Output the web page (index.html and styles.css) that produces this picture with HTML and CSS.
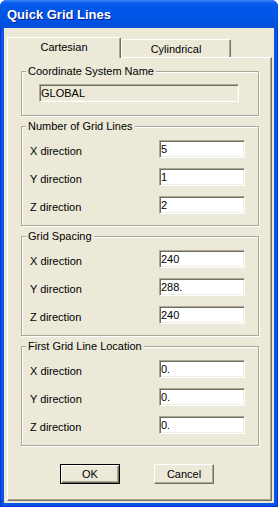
FILE: index.html
```html
<!DOCTYPE html>
<html lang="en">
<head>
  <meta charset="UTF-8" />
  <title>Quick Grid Lines</title>
  <link rel="stylesheet" href="styles.css">
</head>
<body>

<div class="window">
  <div class="titlebar">
    <span class="title">Quick Grid Lines</span>
  </div>

  <div class="client">
    <!-- tabs -->
    <div class="tabs">
      <div class="tab active">Cartesian</div>
      <div class="tab">Cylindrical</div>
    </div>

    <div class="panel">
      <fieldset class="group group-name">
        <legend>Coordinate System Name</legend>
        <input type="text" class="field field-name" value="GLOBAL" readonly>
      </fieldset>

      <fieldset class="group">
        <legend>Number of Grid Lines</legend>
        <div class="row"><label>X direction</label><input type="text" class="field" value="5"></div>
        <div class="row"><label>Y direction</label><input type="text" class="field" value="1"></div>
        <div class="row"><label>Z direction</label><input type="text" class="field" value="2"></div>
      </fieldset>

      <fieldset class="group">
        <legend>Grid Spacing</legend>
        <div class="row"><label>X direction</label><input type="text" class="field" value="240"></div>
        <div class="row"><label>Y direction</label><input type="text" class="field" value="288."></div>
        <div class="row"><label>Z direction</label><input type="text" class="field" value="240"></div>
      </fieldset>

      <fieldset class="group">
        <legend>First Grid Line Location</legend>
        <div class="row"><label>X direction</label><input type="text" class="field" value="0."></div>
        <div class="row"><label>Y direction</label><input type="text" class="field" value="0."></div>
        <div class="row"><label>Z direction</label><input type="text" class="field" value="0."></div>
      </fieldset>

      <div class="buttons">
        <button class="btn btn-default">OK</button>
        <button class="btn">Cancel</button>
      </div>
    </div>
  </div>
</div>

</body>
</html>
```

FILE: styles.css
```css
body {
  margin: 0;
  background: #fff;
  font-family: "Liberation Sans", Arial, sans-serif;
  font-size: 11px;
  color: #000;
}
.window {
  width: 278px;
  height: 507px;
  box-sizing: border-box;
  display: flex;
  flex-direction: column;
  background: #0a55e6;
  border-radius: 7px 7px 0 0;
  padding: 0 4px 4px 4px;
  box-shadow: inset 1px 0 #0831d9, inset -1px 0 #0831d9, inset 0 -1px #0831d9;
}
.titlebar {
  height: 28px;
  margin: 0 -4px;
  padding: 7px 0 0 7px;
  box-sizing: border-box;
  border-radius: 7px 7px 0 0;
  background: linear-gradient(#3d8cf6 0, #0a5ced 3px, #0057e8 9px, #0055e5 18px, #0050df 24px, #0b4fd6 28px);
}
.title {
  color: #fff;
  font-weight: bold;
  font-size: 13px;
  line-height: 16px;
  text-shadow: 1px 1px #0a1e8f;
}
.client {
  flex: 1;
  display: flex;
  flex-direction: column;
  background: #ece9d8;
  padding: 9px 2px 2px 3px;
}

/* tabs */
.tabs {
  display: flex;
  align-items: flex-end;
  height: 20px;
}
.tab {
  box-sizing: border-box;
  height: 18px;
  padding-top: 3px;
  line-height: 13px;
  text-align: center;
  background: #ece9d8;
  border: 1px solid;
  border-color: #fff #716f64 transparent #fff;
  border-bottom: none;
  border-radius: 2px 2px 0 0;
  box-shadow: inset -1px 0 #aca899;
}
.tab.active {
  width: 114px;
  height: 21px;
  margin-bottom: -1px;
  position: relative;
  z-index: 1;
}
.tab:not(.active) {
  width: 110px;
}

.panel {
  flex: 1;
  display: flex;
  flex-direction: column;
  border: 1px solid;
  border-color: #fff #716f64 #716f64 #fff;
  box-shadow: inset -1px -1px #aca899;
  padding: 7px 12px 0 13px;
}

/* group boxes */
.group {
  margin: 0 0 4px 0;
  min-width: 0;
  border: 1px solid #aca899;
  box-shadow: inset 1px 1px #fff, 1px 1px #fff;
  padding: 0 0 11px 8px;
}
legend {
  margin-left: -4px;
  padding: 0 2px;
  line-height: 13px;
  background: #ece9d8;
}
.group-name {
  padding-bottom: 13px;
}
.row {
  display: flex;
  align-items: center;
  height: 18px;
  margin-top: 10px;
}
.row:first-of-type {
  margin-top: 7px;
}
.row label {
  width: 129px;
  padding-top: 4px;
}

.field {
  box-sizing: border-box;
  width: 86px;
  height: 18px;
  margin: 0;
  padding: 0 1px;
  font-family: inherit;
  font-size: 11px;
  color: #000;
  background: #fff;
  border: 1px solid;
  border-color: #aca899 #fff #fff #aca899;
  box-shadow: inset 1px 1px #716f64, inset -1px -1px #f1efe2;
  outline: none;
}
.field-name {
  width: 200px;
  margin: 6px 0 0 9px;
  background: #ece9d8;
}

/* buttons */
.buttons {
  display: flex;
  gap: 34px;
  margin-top: 14px;
  padding-left: 39px;
}
.btn {
  box-sizing: border-box;
  width: 60px;
  height: 20px;
  padding: 0;
  font-family: inherit;
  font-size: 11px;
  color: #000;
  background: #ece9d8;
  border: 1px solid;
  border-color: #fff #716f64 #716f64 #fff;
  box-shadow: inset -1px -1px #aca899;
}
.btn-default {
  border-color: #000;
  box-shadow: inset 1px 1px #fff, inset -1px -1px #716f64, inset -2px -2px #aca899;
}
```
